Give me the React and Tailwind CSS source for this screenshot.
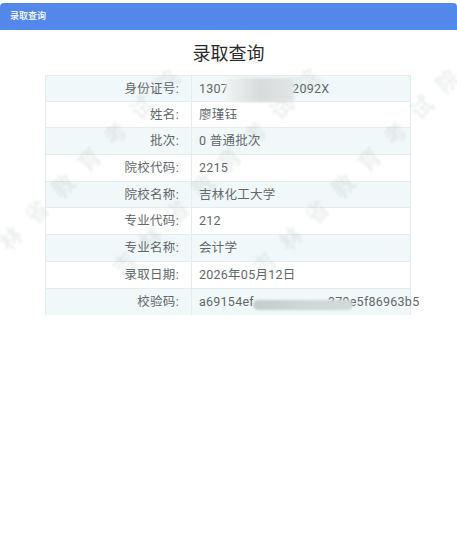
const rows = [
  ["身份证号:", "id"],
  ["姓名:", "廖瑾钰"],
  ["批次:", "0 普通批次"],
  ["院校代码:", "2215"],
  ["院校名称:", "吉林化工大学"],
  ["专业代码:", "212"],
  ["专业名称:", "会计学"],
  ["录取日期:", "2026年05月12日"],
  ["校验码:", "check"],
];

function Watermark({ className }) {
  return (
    <div className={"absolute top-[168px] -translate-x-1/2 -translate-y-1/2 -rotate-45 whitespace-nowrap text-[22px] leading-none font-bold tracking-[15px] text-[#5a6a70] opacity-[0.1] blur-[0.8px] pointer-events-none " + className}>
      吉林省教育考试院
    </div>
  );
}

function Value({ value }) {
  if (value === "id") {
    return (
      <span className="flex items-center">
        <span>1307</span>
        <span className="relative z-20 -ml-[2px] -mr-[2px] h-[24px] w-[68px] shrink-0 translate-y-[1px] bg-gradient-to-r from-[#f0f3f4] via-[#d8dbdc] to-[#e2e5e6] blur-[1.5px]"></span>
        <span>2092X</span>
      </span>
    );
  }
  if (value === "check") {
    return (
      <span className="flex items-center whitespace-nowrap">
        <span>a69154ef</span>
        <span className="relative z-20 -ml-[1px] -mr-[25px] h-[10px] w-[100px] shrink-0 translate-y-[3px] rounded-full bg-gradient-to-r from-[#c4cccc] via-[#cfd6d6] to-[#d3dada] blur-[0.8px]"></span>
        <span>379e5f86963b5</span>
      </span>
    );
  }
  return value;
}

export default function App() {
  return (
    <div className="relative w-[457px] h-[534px] overflow-hidden bg-white pt-[3px] font-['Roboto','Noto_Sans_CJK_SC',sans-serif] text-[#62676b]">
      <div className="h-[27px] flex items-center px-[10px] bg-[#5388ea] rounded-t-[4px] text-[9px] font-medium text-white">
        录取查询
      </div>
      <h1 className="mt-[10px] h-[27px] text-center text-[18px] leading-[27px] font-normal text-[#2b2b2b]">
        录取查询
      </h1>
      <div className="relative mt-[8px] ml-[45px] w-[366px]">
        {rows.map(([label, value], i) => (
          <div key={label} className={"h-[26.7px] grid grid-cols-[147px_minmax(0,1fr)] border-b border-[#e6ebee] text-[12.5px] " + (i % 2 === 0 ? "bg-[#f1f8f9]" : "bg-white") + (i === 0 ? " border-t" : "") + (i === 8 ? " border-b-0" : "")}>
            <div className="flex items-center justify-end pt-[1px] pr-[12px] border-l border-r border-[#e6ebee] tracking-[0.3px]">{label}</div>
            <div className="flex items-center min-w-0 pt-[1px] pl-[7px] border-r border-[#e6ebee] tracking-[0.25px]">
              <Value value={value} />
            </div>
          </div>
        ))}
      </div>
      <Watermark className="left-[82px]" />
      <Watermark className="left-[222px]" />
      <Watermark className="left-[362px]" />
    </div>
  );
}
